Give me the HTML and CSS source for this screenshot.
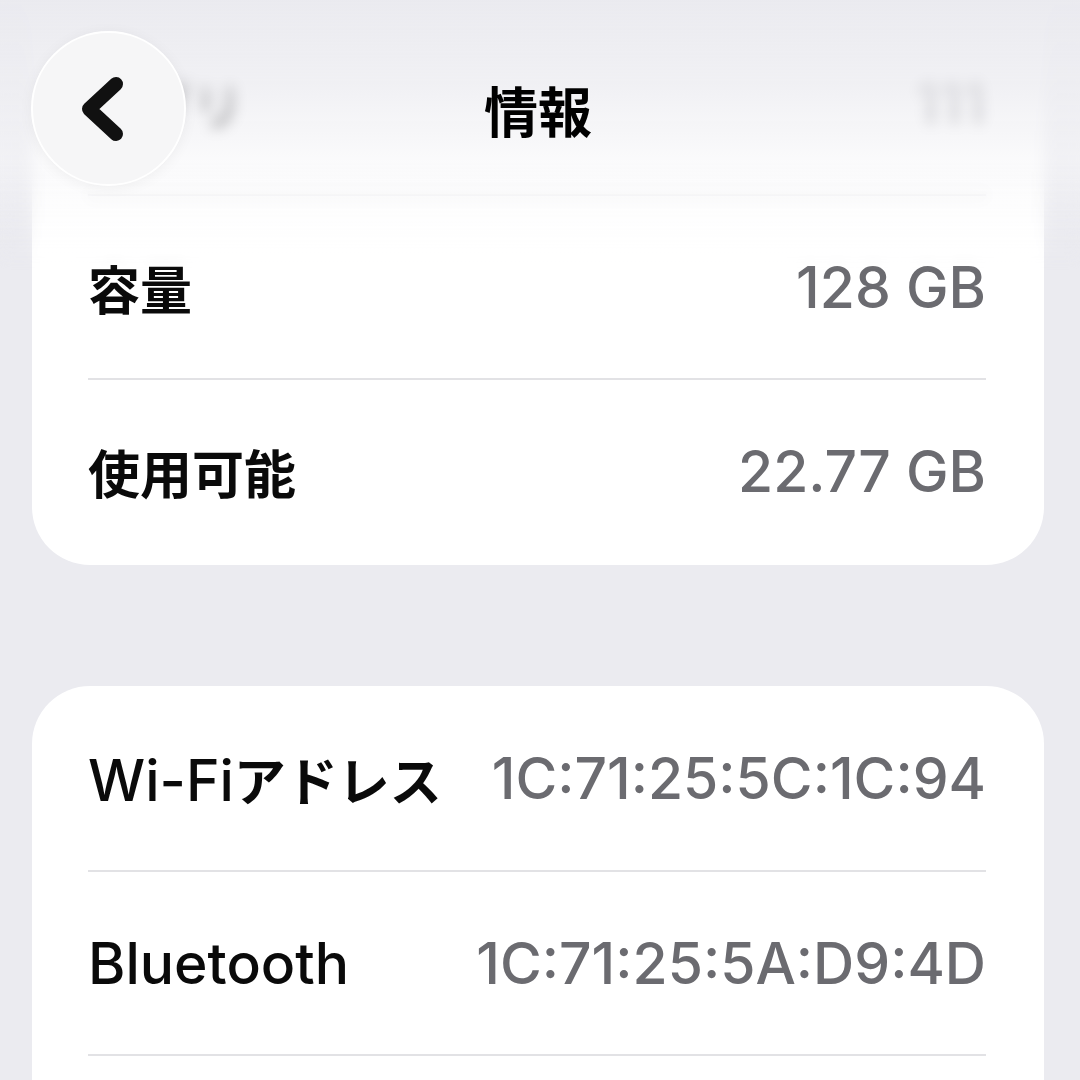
FILE: index.html
```html
<!DOCTYPE html>
<html lang="ja">
<head>
<meta charset="utf-8">
<title>情報</title>
<link rel="stylesheet" href="styles.css">
</head>
<body>
<div class="screen">
  <main class="content">
    <section class="card card-first">
      <div class="row"><span class="label ja">アプリ</span><span class="value">111</span></div>
      <div class="row"><span class="label ja">容量</span><span class="value">128 GB</span></div>
      <div class="row"><span class="label ja">使用可能</span><span class="value">22.77 GB</span></div>
    </section>
    <section class="card card-second">
      <div class="row"><span class="label">Wi-Fi<span class="ja">アドレス</span></span><span class="value">1C:71:25:5C:1C:94</span></div>
      <div class="row"><span class="label">Bluetooth</span><span class="value">1C:71:25:5A:D9:4D</span></div>
      <div class="row"></div>
    </section>
  </main>
  <header class="navbar">
    <h1 class="title">情報</h1>
  </header>
  <button class="back" aria-label="戻る">
    <svg class="chevron" viewBox="0 0 151 151" width="151" height="151">
      <path d="M83 51 L56 76 L83 101" fill="none" stroke="#111" stroke-width="14" stroke-linecap="round" stroke-linejoin="round"/>
    </svg>
  </button>
</div>
</body>
</html>
```
FILE: styles.css
```css
* { box-sizing: border-box; }
html, body {
  margin: 0;
  padding: 0;
  width: 1080px;
  height: 1080px;
  overflow: hidden;
  background: #ebebf0;
}
.screen {
  position: relative;
  width: 1080px;
  height: 1080px;
  overflow: hidden;
  background: #ebebf0;
  font-family: Inter, "Noto Sans CJK JP", sans-serif;
}
.content {
  display: flex;
  flex-direction: column;
  padding: 0 36px 0 32px;
}
.card {
  background: #ffffff;
  border-radius: 58px;
}
.card-first {
  margin-top: -190px;
  padding-top: 200px;
  padding-bottom: 3px;
}
.card-second {
  margin-top: 121px;
}
.row {
  display: flex;
  align-items: center;
  justify-content: space-between;
  height: 184px;
  margin: 0 58px 0 56px;
}
.row + .row {
  border-top: 2px solid #e2e2e5;
}
.label {
  font-size: 57px;
  font-weight: 500;
  color: #0a0a0a;
  white-space: nowrap;
}
.ja {
  font-family: "Noto Sans CJK JP", sans-serif;
  font-size: 52px;
  font-weight: 600;
}
.value {
  font-size: 57px;
  font-weight: 500;
  color: #6b6b70;
  white-space: nowrap;
}
.navbar {
  position: absolute;
  top: 0;
  left: 0;
  right: 0;
  height: 270px;
  display: flex;
  justify-content: center;
  align-items: flex-start;
  padding-top: 80px;
  backdrop-filter: blur(7px);
  -webkit-backdrop-filter: blur(7px);
  background: linear-gradient(to bottom,
    rgba(234, 234, 239, 0.96) 0%,
    rgba(238, 238, 242, 0.86) 30%,
    rgba(246, 246, 248, 0.55) 60%,
    rgba(255, 255, 255, 0) 100%);
  -webkit-mask-image: linear-gradient(to bottom, #000 65%, transparent 100%);
  mask-image: linear-gradient(to bottom, #000 65%, transparent 100%);
}
.title {
  margin: 0 0 0 -4px;
  font-family: "Noto Sans CJK JP", sans-serif;
  font-size: 54px;
  line-height: 60px;
  font-weight: 700;
  color: #000;
}
.back {
  position: absolute;
  left: 31px;
  top: 31px;
  width: 155px;
  height: 155px;
  padding: 0;
  border-radius: 50%;
  border: 2px solid #ffffff;
  background: #f6f6f7;
  box-shadow: 0 2px 14px rgba(0, 0, 0, 0.05);
  display: flex;
  align-items: center;
  justify-content: center;
}
.chevron {
  display: block;
}
```
